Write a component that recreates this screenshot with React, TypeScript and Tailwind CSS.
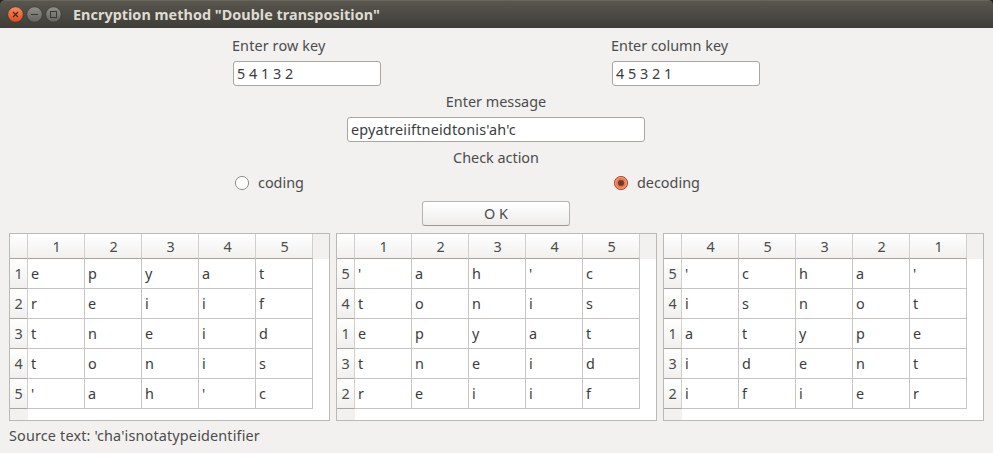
import type { ReactNode } from "react";

const grids = [
  { cols: "12345", rows: "12345", cells: ["epyat", "reiif", "tneid", "tonis", "'ah'c"] },
  { cols: "12345", rows: "54132", cells: ["'ah'c", "tonis", "epyat", "tneid", "reiif"] },
  { cols: "45321", rows: "54132", cells: ["'cha'", "isnot", "atype", "ident", "ifier"] },
];

function WindowButton({ close, children }: { close?: boolean; children: ReactNode }) {
  return (
    <svg width="17" height="17" viewBox="0 0 17 17" fill="none">
      <defs>
        <linearGradient id={close ? "closeFill" : "plainFill"} x1="0" y1="0" x2="0" y2="1">
          <stop offset="0" stopColor={close ? "#f58b68" : "#92908a"} />
          <stop offset="1" stopColor={close ? "#de4c1b" : "#64625c"} />
        </linearGradient>
      </defs>
      <circle cx="8.5" cy="8.5" r="7.8" fill={close ? "url(#closeFill)" : "url(#plainFill)"} stroke="#3b3934" strokeWidth="0.8" />
      {children}
    </svg>
  );
}

function Field({ value, className }: { value: string; className: string }) {
  return (
    <div className={`flex h-[25px] items-center whitespace-pre rounded-[3px] border border-[#aaa6a1] bg-white pl-[3px] text-[#3c3c3c] ${className}`}>
      {value}
    </div>
  );
}

function Grid({ cols, rows, cells }: { cols: string; rows: string; cells: string[] }) {
  return (
    <div className="flex h-[188px] w-[321px] flex-col border border-[#bcb9b4] bg-white">
      <div className="flex h-[25px] shrink-0 bg-[#f2f1f0]">
        <div className="w-[18px] border-r border-b border-r-[#d2d0cd] border-b-[#aaa6a1] bg-linear-to-b from-white to-[#f1f0ef]" />
        {cols.split("").map((c, i) => (
          <div key={i} className="flex w-[57px] items-center justify-center border-r border-b border-r-[#d2d0cd] border-b-[#aaa6a1] bg-linear-to-b from-white to-[#f1f0ef] pt-px pl-px">
            {c}
          </div>
        ))}
      </div>
      {cells.map((row, r) => (
        <div key={r} className="flex h-[30px] shrink-0">
          <div className="flex w-[18px] items-center justify-center border-r border-b border-r-[#d2d0cd] border-b-[#aaa6a1] bg-linear-to-b from-white to-[#f1f0ef] pt-px">
            {rows[r]}
          </div>
          {row.split("").map((c, i) => (
            <div key={i} className="flex w-[57px] items-center border-r border-b border-[#c6c5c4] pt-px pl-[3px] text-[#3c3c3c]">
              {c}
            </div>
          ))}
        </div>
      ))}
      <div className="w-[18px] grow border-r border-[#f2f1f0] bg-[#f2f1f0]" />
    </div>
  );
}

export default function App() {
  return (
    <div className="flex h-[453px] w-[993px] flex-col bg-[#f2f1f0] font-['Noto_Sans','Open_Sans',sans-serif] text-[14.4px] leading-5 text-[#4c4c4c]">
      <header className="h-7 shrink-0 bg-[#24221f]">
        <div className="flex h-7 items-center gap-[2px] rounded-t-[5px] border-t border-[#68655c] bg-linear-to-b from-[#59564e] to-[#3e3d38] pl-[7px] text-[#dfdbd2]">
          <WindowButton close>
            <path d="M6 6l5 5M11 6l-5 5" stroke="#4a2418" strokeWidth="1.1" />
          </WindowButton>
          <WindowButton>
            <path d="M5 8.5h7" stroke="#3b3935" />
          </WindowButton>
          <WindowButton>
            <rect x="5.5" y="5.5" width="6" height="6" stroke="#3b3935" />
          </WindowButton>
          <h1 className="ml-[9px] whitespace-nowrap pt-px font-bold tracking-[0.03px]">Encryption method "Double transposition"</h1>
        </div>
      </header>
      <main className="flex flex-col px-[9px] pt-2">
        <div className="flex pl-[223px]">
          <div className="w-[379px]">
            <div className="tracking-[0.12px]">Enter row key</div>
            <Field value="5 4 1 3 2" className="mt-[5px] ml-px w-[148px]" />
          </div>
          <div>
            <div>Enter column key</div>
            <Field value="4 5 3 2 1" className="mt-[5px] ml-px w-[148px]" />
          </div>
        </div>
        <div className="mt-[6px] flex flex-col items-center pr-px">
          <div>Enter message</div>
          <Field value="epyatreiiftneidtonis'ah'c" className="mt-[5px] w-[298px] tracking-[0.18px]" />
          <div className="mt-[6px]">Check action</div>
        </div>
        <div className="mt-[5px] flex pl-[225px]">
          <div className="flex w-[379px] items-center">
            <svg width="16" height="16" viewBox="0 0 16 16">
              <circle cx="8" cy="8" r="6.6" fill="white" stroke="#918e89" />
            </svg>
            <span className="ml-2">coding</span>
          </div>
          <div className="flex items-center">
            <svg width="16" height="16" viewBox="0 0 16 16">
              <circle cx="8" cy="8" r="6.6" fill="#ed764d" stroke="#b3532f" />
              <circle cx="8" cy="8" r="5.4" fill="none" stroke="#f49a78" />
              <circle cx="8" cy="8" r="3" fill="#6e3c2c" />
            </svg>
            <span className="ml-2">decoding</span>
          </div>
        </div>
        <div className="mt-2 flex justify-center pr-px">
          <button className="flex h-[25px] w-[148px] items-center justify-center rounded-[3px] border border-[#b8b5b1] border-b-[#9c9995] bg-linear-to-b from-white to-[#eeedec]">
            O K
          </button>
        </div>
        <div className="mt-[7px] flex gap-[6px]">
          {grids.map((g, i) => (
            <Grid key={i} {...g} />
          ))}
        </div>
        <footer className="mt-[5px] tracking-[0.16px]">Source text: 'cha'isnotatypeidentifier</footer>
      </main>
    </div>
  );
}
